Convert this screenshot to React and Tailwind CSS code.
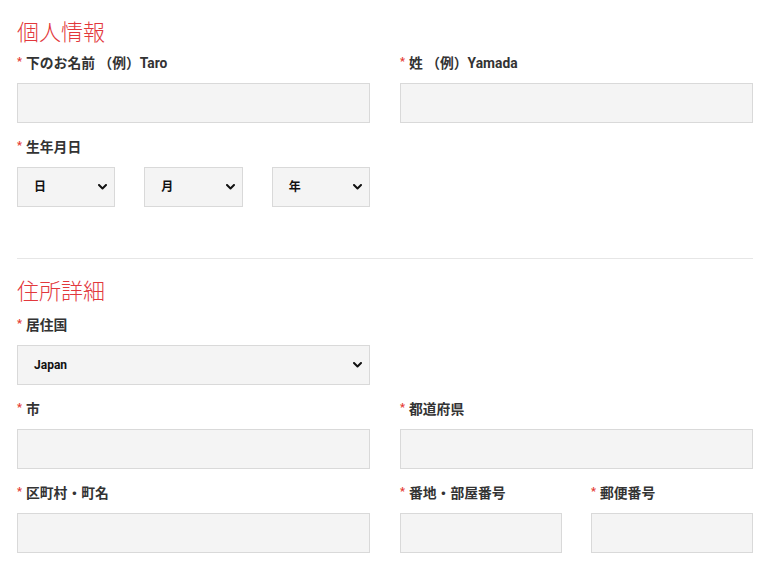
import React from "react";

const font = { fontFamily: '"Roboto", "Noto Sans CJK JP", sans-serif' };

function Label({ children }) {
  return (
    <div className="flex items-start h-[20px] mb-[10px] text-[13.8px] leading-[20px] font-bold text-[#333333]">
      <span className="text-[#e53935] text-[11px] leading-[18px] mr-[4px] font-bold">*</span>
      <span>{children}</span>
    </div>
  );
}

function Input() {
  return <div className="h-[40px] bg-[#f4f4f4] border border-[#d9d9d9]" />;
}

function Chevron() {
  return (
    <svg width="9" height="6" viewBox="0 0 9 6" className="shrink-0">
      <path d="M1 1 L4.5 4.5 L8 1" fill="none" stroke="#111" strokeWidth="2" strokeLinecap="round" strokeLinejoin="round" />
    </svg>
  );
}

function Select({ value }) {
  return (
    <div className="h-[40px] bg-[#f4f4f4] border border-[#d9d9d9] flex items-center justify-between pl-[16px] pr-[7px]">
      <span className="text-[12px] font-bold text-[#111]">{value}</span>
      <Chevron />
    </div>
  );
}

export default function App() {
  return (
    <div className="bg-white w-[770px] h-[571px] px-[17px] pt-[18px]" style={font}>
      <h2 className="text-[22px] leading-[30px] text-[#e2383c] font-light mb-[5px]">個人情報</h2>
      <div className="grid grid-cols-2 gap-x-[30px] gap-y-[14px]">
        <div>
          <Label>下のお名前 （例）Taro</Label>
          <Input />
        </div>
        <div>
          <Label>姓 （例）Yamada</Label>
          <Input />
        </div>
        <div>
          <Label>生年月日</Label>
          <div className="grid grid-cols-3 gap-[29px]">
            <Select value="日" />
            <Select value="月" />
            <Select value="年" />
          </div>
        </div>
      </div>
      <div className="h-px bg-[#e6e6e6] mt-[51px] mb-[18px]" />
      <h2 className="text-[22px] leading-[30px] text-[#e2383c] font-light mb-[8px]">住所詳細</h2>
      <div className="grid grid-cols-2 gap-x-[30px] gap-y-[14px]">
        <div>
          <Label>居住国</Label>
          <Select value="Japan" />
        </div>
        <div />
        <div>
          <Label>市</Label>
          <Input />
        </div>
        <div>
          <Label>都道府県</Label>
          <Input />
        </div>
        <div>
          <Label>区町村・町名</Label>
          <Input />
        </div>
        <div className="grid grid-cols-2 gap-[29px]">
          <div>
            <Label>番地・部屋番号</Label>
            <Input />
          </div>
          <div>
            <Label>郵便番号</Label>
            <Input />
          </div>
        </div>
      </div>
    </div>
  );
}
